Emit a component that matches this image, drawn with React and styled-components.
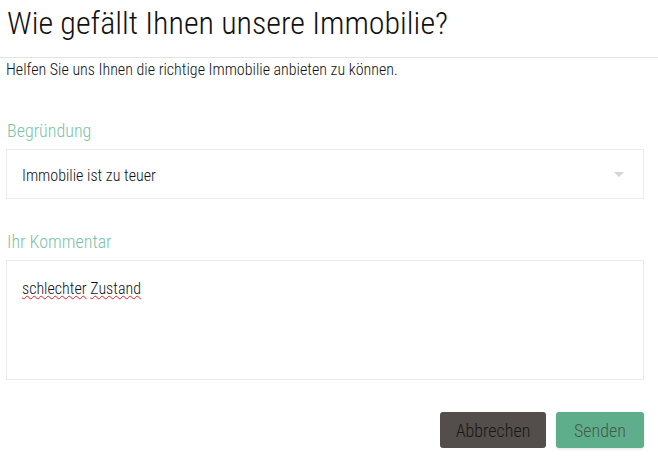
import React from "react";
import styled, { createGlobalStyle } from "styled-components";

const GlobalStyle = createGlobalStyle`
  html, body { margin: 0; padding: 0; background: #ffffff; }
  body { font-family: "Roboto Condensed", "Roboto", sans-serif; color: #222; }
`;

const Page = styled.div`
  width: 658px;
  height: 456px;
  box-sizing: border-box;
  overflow: hidden;
`;

const Header = styled.header`
  height: 58px;
  box-sizing: border-box;
  padding: 4px 0 0 7px;
  border-bottom: 1px solid #e3e3e3;
`;

const Title = styled.h1`
  margin: 0;
  font-family: "Roboto Condensed", "Roboto", sans-serif;
  font-weight: 300;
  font-size: 32px;
  line-height: 38px;
  color: #111;
`;

const Body = styled.div`
  padding: 0 14px 0 6px;
`;

const Intro = styled.p`
  margin: 2px 0 0;
  font-size: 16px;
  line-height: 20px;
  font-weight: 300;
  color: #111;
`;

const Label = styled.label`
  display: block;
  margin: ${p => p.$top}px 0 7px 1px;
  font-size: 18px;
  line-height: 22px;
  font-weight: 300;
  color: #7cc2a8;
`;

const Select = styled.div`
  height: 50px;
  box-sizing: border-box;
  border: 1px solid #ebebeb;
  display: flex;
  align-items: center;
  justify-content: space-between;
  padding: 3px 19px 0 15px;
  font-size: 16px;
  font-weight: 300;
  color: #111;
`;

const Caret = styled.span`
  width: 0;
  height: 0;
  margin-top: -3px;
  border-left: 5px solid transparent;
  border-right: 5px solid transparent;
  border-top: 5px solid #d6d6d6;
`;

const TextArea = styled.div`
  height: 120px;
  box-sizing: border-box;
  border: 1px solid #ebebeb;
  padding: 18px 15px;
  font-size: 16px;
  font-weight: 300;
  line-height: 20px;
  color: #111;
`;

const Misspelled = styled.span`
  text-decoration: underline wavy #e02020;
  text-decoration-thickness: 1px;
  text-underline-offset: 1px;
`;

const Actions = styled.div`
  display: flex;
  justify-content: flex-end;
  gap: 10px;
  margin-top: 32px;
`;

const Button = styled.button`
  height: 36px;
  width: ${p => p.$w}px;
  border: none;
  border-radius: 3px;
  font-family: "Roboto Condensed", "Roboto", sans-serif;
  font-size: 18px;
  font-weight: 300;
  cursor: pointer;
  background: ${p => (p.$primary ? "#5fae8b" : "#534d4c")};
  color: ${p => (p.$primary ? "#46584d" : "#1a1717")};
  box-shadow: ${p => (p.$primary ? "0 1px 3px rgba(0,0,0,0.12)" : "none")};
`;

export default function App() {
  return (
    <Page>
      <GlobalStyle />
      <Header>
        <Title>Wie gefällt Ihnen unsere Immobilie?</Title>
      </Header>
      <Body>
        <Intro>Helfen Sie uns Ihnen die richtige Immobilie anbieten zu können.</Intro>
        <Label $top={40}>Begründung</Label>
        <Select>
          <span>Immobilie ist zu teuer</span>
          <Caret />
        </Select>
        <Label $top={32}>Ihr Kommentar</Label>
        <TextArea>
          <Misspelled>schlechter</Misspelled> <Misspelled>Zustand</Misspelled>
        </TextArea>
        <Actions>
          <Button $w={106}>Abbrechen</Button>
          <Button $w={88} $primary>Senden</Button>
        </Actions>
      </Body>
    </Page>
  );
}
